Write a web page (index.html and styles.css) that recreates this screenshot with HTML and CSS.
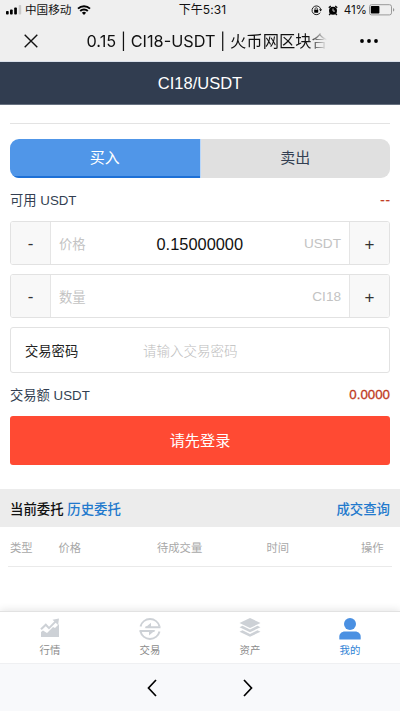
FILE: index.html
```html
<!DOCTYPE html>
<html lang="zh-CN">
<head>
<meta charset="utf-8">
<meta name="viewport" content="width=device-width, initial-scale=1">
<title>CI18/USDT</title>
<link rel="stylesheet" href="styles.css">
</head>
<body>
<div class="app">
  <header class="chrome">
    <div class="status">
      <div class="carrier">
        <svg width="16" height="10" viewBox="0 0 16 10"><rect x="0" y="6" width="2.7" height="3.5" rx=".8"/><rect x="4" y="4.5" width="2.7" height="5" rx=".8"/><rect x="8.2" y="2.5" width="2.7" height="7" rx=".8"/><rect x="12.7" y="0" width="2.5" height="9.5" rx=".8" fill="#c9c9c9"/></svg>
        <span>中国移动</span>
        <svg class="wifi" width="14" height="10" viewBox="0 0 14 10"><path d="M1 3.7a8.5 8.5 0 0 1 12 0M3.2 6a5.4 5.4 0 0 1 7.6 0" fill="none" stroke="#000" stroke-width="1.9"/><path d="M4.9 7.7a3 3 0 0 1 4.2 0L7 9.9z"/></svg>
      </div>
      <time>下午5:31</time>
      <div class="power">
        <svg width="11" height="11" viewBox="0 0 11 11"><path d="M9.2 7.6A4.4 4.4 0 1 1 9.7 4.2" fill="none" stroke="#222" stroke-width="1"/><path d="M8.1 4.2h2.9L9.7 6.4z"/><rect x="3.2" y="4.7" width="4" height="3" rx=".4"/><path d="M4 5V3.9a1.2 1.2 0 0 1 2.4 0V5" fill="none" stroke="#222" stroke-width=".8"/></svg>
        <svg class="alarm" width="10" height="11" viewBox="0 0 10 11"><circle cx="5" cy="5.8" r="4"/><path d="M.8 2.8 2.8 1M9.2 2.8 7.2 1M2.2 8.8l-1 1.2M7.8 8.8l1 1.2" stroke="#111" stroke-width="1.5"/><path d="M5 3.5v2.6h2" stroke="#eee" stroke-width=".8" fill="none"/></svg>
        <span>41%</span>
        <svg width="26" height="12" viewBox="0 0 26 12"><rect x=".5" y=".7" width="22" height="10.2" rx="2" fill="none" stroke="#999"/><rect x="1.8" y="2" width="8.6" height="7.6" rx=".8"/><path d="M24 4v3.6q1.3-.4 1.3-1.8T24 4z" fill="#999"/></svg>
      </div>
    </div>
    <div class="titlebar">
      <svg class="close" width="14" height="14" viewBox="0 0 14 14"><path d="M.7.7l12.6 12.6M13.3.7.7 13.3" stroke="#111" stroke-width="1.4"/></svg>
      <div class="page-title">0.15 | CI18-USDT | 火币网区块合</div>
      <svg class="more" width="18" height="4" viewBox="0 0 18 4"><circle cx="2" cy="2" r="1.9"/><circle cx="9" cy="2" r="1.9"/><circle cx="16" cy="2" r="1.9"/></svg>
    </div>
  </header>
  <h1 class="pair">CI18/USDT</h1>
  <main class="trade">
    <div class="side-tabs"><div class="buy">买入</div><div class="sell">卖出</div></div>
    <div class="line available"><span>可用 USDT</span><b>--</b></div>
    <div class="stepper"><span class="step minus">-</span><span class="name">价格</span><span class="value">0.15000000</span><span class="unit">USDT</span><span class="step">+</span></div>
    <div class="stepper"><span class="step minus">-</span><span class="name">数量</span><span class="value"></span><span class="unit">CI18</span><span class="step">+</span></div>
    <div class="password"><span class="label">交易密码</span><span class="hint">请输入交易密码</span></div>
    <div class="line total"><span>交易额 USDT</span><b>0.0000</b></div>
    <div class="login">请先登录</div>
  </main>
  <section class="orders">
    <div class="orders-head"><span>当前委托 <a>历史委托</a></span><a>成交查询</a></div>
    <div class="columns"><span>类型</span><span>价格</span><span>待成交量</span><span>时间</span><span>操作</span></div>
  </section>
  <nav class="tabbar">
    <div class="tab"><svg width="20" height="20" viewBox="0 0 20 20"><path d="M1 19v-5l2-1.500 4 2.500 6-6 2 1 4-4v13z" fill="#cdd1d6"/><path d="M1 11.300l4.800-4.600 3.200 3.400 7.200-7.200" fill="none" stroke="#cdd1d6" stroke-width="2"/><path d="M12.500 1.800 19 .5l-.9 6.500z" fill="#cdd1d6"/></svg><span>行情</span></div>
    <div class="tab"><svg width="22" height="22" viewBox="0 0 22 22"><g fill="none" stroke="#cdd1d6" stroke-width="2"><path d="M1.500 8.500A9.800 9.800 0 0 1 20.500 8.500M20.500 13.500A9.800 9.800 0 0 1 1.500 13.500"/><path d="M6.500 9.300H21.500M.5 12.900H15.500"/></g><path d="M5.500 10.300 12 4.800v4zM16.500 11.900 10 17.400v-4z" fill="#cdd1d6"/></svg><span>交易</span></div>
    <div class="tab"><svg width="22" height="20" viewBox="0 0 22 20" fill="#cdd1d6"><path d="M11 0 21.5 5 11 10 .5 5z"/><path d="m.5 9.2 3-1.4 7.5 3.6 7.5-3.6 3 1.4L11 14.3z"/><path d="m.5 13.7 3-1.4 7.5 3.6 7.5-3.6 3 1.4L11 18.8z"/></svg><span>资产</span></div>
    <div class="tab active"><svg width="22" height="22" viewBox="0 0 22 22" fill="#4a90e2"><circle cx="11" cy="6" r="6"/><path d="M.3 21v-2.2c0-3 2.5-5.2 5.5-5.2h10.4c3 0 5.5 2.2 5.5 5.2V21q0 .6-.6.6H.9Q.3 21.600.3 21z"/></svg><span>我的</span></div>
  </nav>
  <footer class="browser-nav">
    <svg width="10" height="18" viewBox="0 0 10 18"><path d="M9 1 1.500 9 9 17"/></svg>
    <svg width="10" height="18" viewBox="0 0 10 18"><path d="M1 1l7.500 8L1 17"/></svg>
  </footer>
</div>
</body>
</html>
```
FILE: styles.css
```css
* { box-sizing: border-box; }
body { margin: 0; background: #fff; font: 13.3px "Liberation Sans", "Noto Sans CJK SC", sans-serif; color: #333f52; }
svg { display: block; flex: none; }
.app { height: 711px; display: flex; flex-direction: column; overflow: hidden; }
.app > * { flex: none; }

.chrome { height: 62px; background: #efefef; border-bottom: 1px solid #d9e0ea; color: #111; font-family: Inter, "Noto Sans CJK SC", sans-serif; }
.status { height: 20px; display: grid; grid-template-columns: 1fr auto 1fr; align-items: center; padding: 0 5px 0 6px; font-size: 11.6px; line-height: 20px; }
.carrier, .power { display: flex; align-items: center; }
.carrier span { margin: 0 6px 0 3px; }
.status time { font-size: 12px; letter-spacing: .1px; margin-left: 4px; }
.power { justify-content: flex-end; }
.power .alarm { margin: 0 6px 0 6px; }
.power span { margin-right: 2px; }
.titlebar { height: 41px; display: flex; align-items: center; padding: 0 22px 0 24px; }
.page-title { margin-left: 48.5px; width: 240px; overflow: hidden; white-space: nowrap; font-size: 16.3px; line-height: 30px; -webkit-mask-image: linear-gradient(90deg, #000 92%, transparent); mask-image: linear-gradient(90deg, #000 92%, transparent); }
.more { margin-left: auto; }

.pair { margin: 0; height: 43px; background: #313d50; border-bottom: 1px solid #677180; color: #fff; font-size: 16.5px; font-weight: 400; line-height: 43px; text-align: center; }

.trade { margin: 18px 10px 0; padding-top: 15px; border-top: 1px solid #e3e3e3; }
.side-tabs { display: flex; height: 39px; border-radius: 9px; overflow: hidden; font-size: 15px; line-height: 38px; text-align: center; }
.side-tabs div { flex: 1; }
.buy { background: #5096e8; color: #fff; border-bottom: 2px solid #1d70d6; }
.sell { background: #e0e0e0; border-left: 1px solid #b9d7fa; }
.line { display: flex; justify-content: space-between; align-items: center; }
.line b { color: #c03a22; font-weight: 400; -webkit-text-stroke: .3px #c03a22; }
.available { height: 43px; }
.available b { letter-spacing: .9px; margin-right: -.9px; }
.stepper { height: 44px; margin-bottom: 9px; border: 1px solid #e2e2e2; border-radius: 3px; display: flex; align-items: center; overflow: hidden; color: #c3c3c3; }
.step { width: 40px; height: 42px; background: #f8f8f8; border-left: 1px solid #e5e5e5; color: #333; font-size: 17px; line-height: 45px; text-align: center; }
.minus { border-left: 0; border-right: 1px solid #e5e5e5; line-height: 43px; }
.name { width: 60px; padding-left: 8px; }
.value { flex: 1; padding-left: 45.5px; padding-top: 2px; color: #111; font-size: 16.4px; }
.unit { padding-right: 8px; font-size: 13.6px; }
.password { height: 46px; border: 1px solid #e2e2e2; border-radius: 3px; display: flex; align-items: center; padding-left: 14px; }
.label { width: 118px; color: #222; }
.hint { color: #bdbdbd; font-size: 13.5px; font-weight: 300; }
.total { height: 43px; }
.login { height: 49px; border-radius: 3px; background: #ff4a33; color: #fff; font-size: 15.2px; line-height: 50px; text-align: center; }

.orders { margin-top: 24px; }
.orders-head { height: 38px; padding: 0 10px; background: #ececec; display: flex; align-items: center; justify-content: space-between; color: #111; font-size: 13.4px; font-weight: 500; }
.orders a { color: #2279cd; }
.columns { height: 40px; margin: 0 8px; padding: 0 2px; border-bottom: 1px solid #eaeaea; display: grid; grid-template-columns: 48.5px 98.5px 109.5px 94.5px auto; align-items: center; color: #a8a8a8; font-size: 11.3px; }

.tabbar { margin-top: auto; height: 52px; display: grid; grid-template-columns: repeat(4, 1fr); background: #fff; border-top: 1px solid #e2e2e2; box-shadow: 0 -1px 8px #0000001c; }
.tab { display: flex; flex-direction: column; align-items: center; justify-content: space-between; padding: 6px 0 4px; color: #8b8b8b; font-size: 10.4px; line-height: 16px; }
.active { color: #2f83d5; }
.browser-nav { height: 48px; background: #f8f9fb; border-top: 1px solid #eff0f2; display: flex; justify-content: center; align-items: center; gap: 86px; }
.browser-nav path { fill: none; stroke: #000; stroke-width: 1.7; }
```
